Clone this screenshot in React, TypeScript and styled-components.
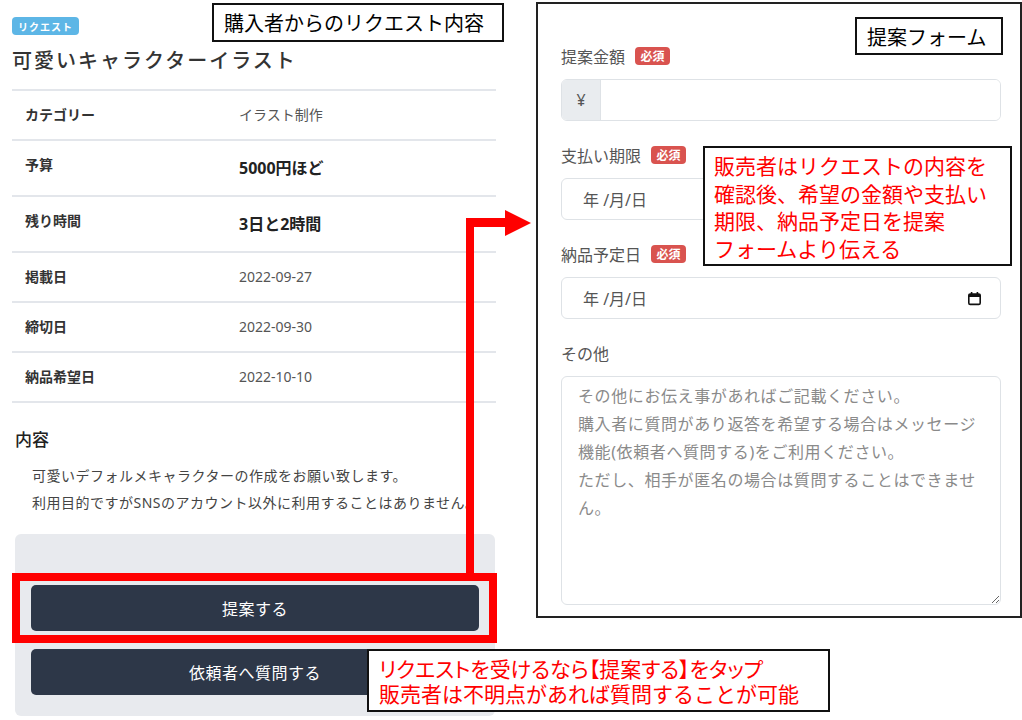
import styled, { createGlobalStyle } from 'styled-components'

const GlobalStyle = createGlobalStyle`
  html, body {
    margin: 0;
    padding: 0;
    background: #fff;
    overflow: hidden;
  }
  body {
    font-family: "Noto Sans", "Noto Sans CJK JP", sans-serif;
    color: #333;
  }
  * {
    box-sizing: border-box;
  }
`

const details = [
  { label: 'カテゴリー', value: 'イラスト制作', strong: false },
  { label: '予算', value: '5000円ほど', strong: true },
  { label: '残り時間', value: '3日と2時間', strong: true },
  { label: '掲載日', value: '2022-09-27', strong: false },
  { label: '締切日', value: '2022-09-30', strong: false },
  { label: '納品希望日', value: '2022-10-10', strong: false },
]

const placeholder =
  'その他にお伝え事があればご記載ください。\n' +
  '購入者に質問があり返答を希望する場合はメッセージ\n' +
  '機能(依頼者へ質問する)をご利用ください。\n' +
  'ただし、相手が匿名の場合は質問することはできませ\n' +
  'ん。'

const CalendarIcon = () => (
  <svg width="15" height="15" viewBox="0 0 15 15">
    <rect x="1.8" y="3" width="11.4" height="10.4" rx="1.4" fill="none" stroke="#111" strokeWidth="1.6" />
    <rect x="1.8" y="3" width="11.4" height="3" fill="#111" />
    <rect x="3.8" y="1" width="1.6" height="3" fill="#111" />
    <rect x="9.6" y="1" width="1.6" height="3" fill="#111" />
  </svg>
)

const App = () => {
  return (
    <Page>
      <GlobalStyle />
      <LeftColumn>
        <TypeBadge>リクエスト</TypeBadge>
        <Title>可愛いキャラクターイラスト</Title>
        <DetailTable>
          {details.map((d) => (
            <DetailRow key={d.label}>
              <DetailLabel>{d.label}</DetailLabel>
              <DetailValue $strong={d.strong}>{d.value}</DetailValue>
            </DetailRow>
          ))}
        </DetailTable>
        <SectionHeading>内容</SectionHeading>
        <Description>
          可愛いデフォルメキャラクターの作成をお願い致します。
          <br />
          利用目的ですがSNSのアカウント以外に利用することはありません。
        </Description>
        <ActionBox>
          <ActionButton>提案する</ActionButton>
          <ActionButton>依頼者へ質問する</ActionButton>
        </ActionBox>
      </LeftColumn>

      <FormPanel>
        <Field>
          <FieldLabel>
            提案金額<Required>必須</Required>
          </FieldLabel>
          <InputGroup>
            <Prefix>¥</Prefix>
            <InputFill />
          </InputGroup>
        </Field>
        <Field>
          <FieldLabel>
            支払い期限<Required>必須</Required>
          </FieldLabel>
          <DateField>
            <span>年 /月/日</span>
            <CalendarIcon />
          </DateField>
        </Field>
        <Field>
          <FieldLabel>
            納品予定日<Required>必須</Required>
          </FieldLabel>
          <DateField>
            <span>年 /月/日</span>
            <CalendarIcon />
          </DateField>
        </Field>
        <Field>
          <FieldLabel>その他</FieldLabel>
          <Notes readOnly placeholder={placeholder} />
        </Field>
      </FormPanel>

      <Callout $left={212} $top={3} $width={292} $height={39}>
        購入者からのリクエスト内容
      </Callout>
      <Callout $left={855} $top={17} $width={148} $height={38}>
        提案フォーム
      </Callout>
      <NoteCallout $left={703} $top={146} $width={309} $height={120}>
        販売者はリクエストの内容を
        <br />
        確認後、希望の金額や支払い
        <br />
        期限、納品予定日を提案
        <br />
        フォームより伝える
      </NoteCallout>
      <NoteCallout $left={367} $top={649} $width={463} $height={63} $small>
        <NoteLine $tight>リクエストを受けるなら【提案する】をタップ</NoteLine>
        <NoteLine>販売者は不明点があれば質問することが可能</NoteLine>
      </NoteCallout>

      <Highlight />
      <Arrow viewBox="0 0 75 375" width="75" height="375">
        <rect x="6" y="13" width="8" height="357" fill="#ff0000" />
        <rect x="6" y="13" width="41" height="9" fill="#ff0000" />
        <polygon points="45,5 71,18 45,31" fill="#ff0000" />
      </Arrow>
    </Page>
  )
}

export default App

const Page = styled.div`
  position: relative;
  display: flex;
  align-items: flex-start;
  width: 1022px;
  height: 720px;
  overflow: hidden;
`

const LeftColumn = styled.div`
  width: 484px;
  margin-left: 12px;
  padding-top: 17px;
  display: flex;
  flex-direction: column;
  align-items: flex-start;
`

const TypeBadge = styled.span`
  display: inline-flex;
  align-items: center;
  height: 18px;
  padding: 0 6px;
  border-radius: 4px;
  background: #5db6e6;
  color: #fff;
  font-size: 10px;
  font-weight: 700;
  letter-spacing: 1px;
`

const Title = styled.h1`
  margin: 12px 0 0;
  font-size: 20px;
  line-height: 28px;
  font-weight: 500;
  letter-spacing: 2px;
  color: #333;
`

const DetailTable = styled.div`
  width: 100%;
  margin-top: 14px;
  border-top: 2px solid #e3e6eb;
`

const DetailRow = styled.div`
  display: grid;
  grid-template-columns: 214px 1fr;
  align-items: start;
  padding: 14px 13px;
  border-bottom: 2px solid #e3e6eb;
`

const DetailLabel = styled.div`
  font-size: 14px;
  line-height: 20px;
  font-weight: 600;
  color: #333;
`

const DetailValue = styled.div<{ $strong: boolean }>`
  font-size: ${(p) => (p.$strong ? '16px' : '14px')};
  line-height: ${(p) => (p.$strong ? '26px' : '20px')};
  font-weight: ${(p) => (p.$strong ? 700 : 400)};
  color: ${(p) => (p.$strong ? '#222' : '#555')};
`

const SectionHeading = styled.h2`
  margin: 25px 0 0 3px;
  font-size: 17px;
  line-height: 24px;
  font-weight: 500;
  color: #222;
`

const Description = styled.p`
  margin: 10px 0 0 20px;
  font-size: 14px;
  line-height: 27px;
  letter-spacing: 0.5px;
  color: #444;
  white-space: nowrap;
`

const ActionBox = styled.div`
  width: 480px;
  margin: 18px 0 0 3px;
  padding: 51px 16px 21px 16px;
  background: #e8eaee;
  border-radius: 6px;
  display: flex;
  flex-direction: column;
  gap: 18px;
`

const ActionButton = styled.button`
  height: 46px;
  border: none;
  border-radius: 5px;
  background: #2d3748;
  color: #fff;
  font-family: inherit;
  font-size: 16px;
  letter-spacing: 0.5px;
`

const FormPanel = styled.div`
  width: 486px;
  height: 616px;
  margin: 2px 0 0 40px;
  padding: 40px 19px 0 23px;
  border: 2px solid #222;
  display: flex;
  flex-direction: column;
  gap: 22px;
`

const Field = styled.div`
  display: flex;
  flex-direction: column;
  gap: 11px;
`

const FieldLabel = styled.label`
  display: flex;
  align-items: center;
  gap: 10px;
  height: 24px;
  font-size: 16px;
  color: #555;
`

const Required = styled.span`
  display: inline-flex;
  align-items: center;
  justify-content: center;
  width: 35px;
  height: 18px;
  border-radius: 4px;
  background: #d9534f;
  color: #fff;
  font-size: 12px;
  font-weight: 700;
`

const InputGroup = styled.div`
  display: flex;
  height: 42px;
  border: 1px solid #dee2e6;
  border-radius: 6px;
  overflow: hidden;
`

const Prefix = styled.div`
  width: 39px;
  display: flex;
  align-items: center;
  justify-content: center;
  background: #e9ecef;
  border-right: 1px solid #dee2e6;
  font-size: 16px;
  color: #555;
`

const InputFill = styled.div`
  flex: 1;
  background: #fff;
`

const DateField = styled.div`
  display: flex;
  align-items: center;
  justify-content: space-between;
  height: 42px;
  padding: 0 18px 0 21px;
  border: 1px solid #dee2e6;
  border-radius: 6px;
  font-size: 16px;
  color: #555;
`

const Notes = styled.textarea`
  width: 100%;
  height: 229px;
  padding: 5px 16px;
  border: 1px solid #dee2e6;
  border-radius: 6px;
  font-family: "Noto Sans", "Noto Sans CJK JP", sans-serif;
  font-size: 16px;
  line-height: 28px;
  letter-spacing: 0.6px;
  outline: none;
  white-space: pre;
  overflow: hidden;

  &::placeholder {
    color: #8a8a8a;
  }
`

const Callout = styled.div<{ $left: number; $top: number; $width: number; $height: number }>`
  position: absolute;
  left: ${(p) => p.$left}px;
  top: ${(p) => p.$top}px;
  width: ${(p) => p.$width}px;
  height: ${(p) => p.$height}px;
  display: flex;
  align-items: center;
  padding-left: 10px;
  background: #fff;
  border: 2px solid #111;
  font-family: "Noto Sans CJK JP", sans-serif;
  font-size: 20px;
  color: #000;
  white-space: nowrap;
`

const NoteCallout = styled.div<{
  $left: number
  $top: number
  $width: number
  $height: number
  $small?: boolean
}>`
  position: absolute;
  left: ${(p) => p.$left}px;
  top: ${(p) => p.$top}px;
  width: ${(p) => p.$width}px;
  height: ${(p) => p.$height}px;
  padding: ${(p) => (p.$small ? '5px 0 0 10px' : '4px 0 0 9px')};
  background: #fff;
  border: 2px solid #111;
  font-family: "Noto Sans CJK JP", sans-serif;
  font-size: 21px;
  line-height: ${(p) => (p.$small ? '25px' : '27.5px')};
  color: #ff0000;
  white-space: nowrap;
`

const NoteLine = styled.div<{ $tight?: boolean }>`
  height: 25px;
  line-height: 25px;
  font-feature-settings: ${(p) => (p.$tight ? '"palt"' : 'normal')};
`

const Highlight = styled.div`
  position: absolute;
  left: 12px;
  top: 573px;
  width: 485px;
  height: 70px;
  border: 8px solid #ff0000;
`

const Arrow = styled.svg`
  position: absolute;
  left: 460px;
  top: 205px;
`
